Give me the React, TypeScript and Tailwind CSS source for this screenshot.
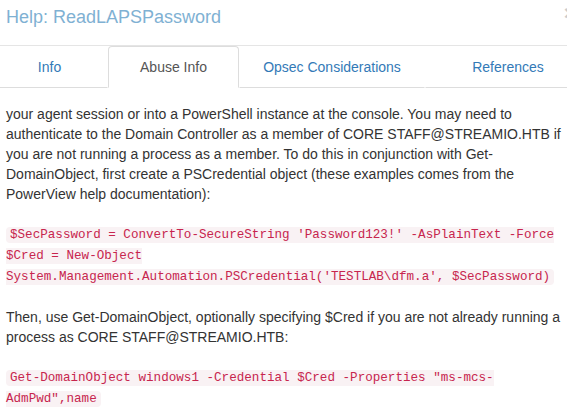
import React from 'react'

const tabs = [
    { label: 'Info', width: 'w-[117px]', active: false },
    { label: 'Abuse Info', width: 'w-[131px]', active: true },
    { label: 'Opsec Considerations', width: 'w-[186px]', active: false },
    { label: 'References', width: 'w-[166px]', active: false },
]

function Code({ children }: { children: React.ReactNode }) {
    return (
        <div className="leading-[21px]">
            <code className="rounded-[4px] bg-[#f9f2f4] px-[4px] py-[1px] align-[1px] font-['Liberation_Mono',monospace] text-[12.6px] leading-[14px] text-[#c7254e]">
                {children}
            </code>
        </div>
    )
}

export default function App() {
    return (
        <div className="h-[414px] w-[567px] overflow-hidden bg-white font-['Liberation_Sans',Arial,sans-serif] text-[14px] leading-[20px] text-[#333]">
            <div className="ml-[-9px] w-[600px]">
                {/* modal header */}
                <div className="flex items-start justify-between border-b border-[#e5e5e5] px-[15px] pb-[15px] pt-[4px]">
                    <h4 className="text-[18px] leading-[26px] text-[#7fb1d3]">Help: ReadLAPSPassword</h4>
                    <button className="mt-[-2px] text-[21px] font-bold leading-none text-black opacity-20">×</button>
                </div>

                {/* tabs */}
                <ul className="flex">
                    {tabs.map((t) => (
                        <li key={t.label} className={`${t.width} shrink-0`}>
                            <a
                                className={
                                    t.active
                                        ? 'block rounded-t-[4px] border border-[#ddd] border-b-white py-[10px] text-center text-[#555]'
                                        : 'block rounded-t-[4px] border border-transparent border-b-[#ddd] py-[10px] text-center text-[#337ab7]'
                                }
                            >
                                {t.label}
                            </a>
                        </li>
                    ))}
                </ul>

                {/* tab content */}
                <div className="flex flex-col gap-[20px] whitespace-nowrap px-[15px] pt-[16px]">
                    <p>
                        your agent session or into a PowerShell instance at the console. You may need to
                        <br />
                        authenticate to the Domain Controller as a member of CORE STAFF@STREAMIO.HTB if
                        <br />
                        you are not running a process as a member. To do this in conjunction with Get-
                        <br />
                        DomainObject, first create a PSCredential object (these examples comes from the
                        <br />
                        PowerView help documentation):
                    </p>
                    <Code>
                        $SecPassword = ConvertTo-SecureString 'Password123!' -AsPlainText -Force
                        <br />
                        $Cred = New-Object
                        <br />
                        System.Management.Automation.PSCredential('TESTLAB\dfm.a', $SecPassword)
                    </Code>
                    <p>
                        Then, use Get-DomainObject, optionally specifying $Cred if you are not already running a
                        <br />
                        process as CORE STAFF@STREAMIO.HTB:
                    </p>
                    <Code>
                        Get-DomainObject windows1 -Credential $Cred -Properties "ms-mcs-
                        <br />
                        AdmPwd",name
                    </Code>
                </div>
            </div>
        </div>
    )
}
